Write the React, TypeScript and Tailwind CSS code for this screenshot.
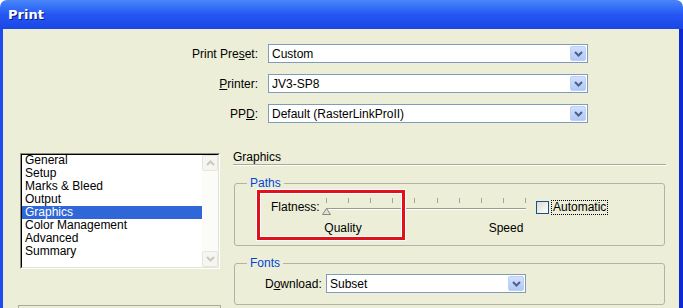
import React from "react";

const PANEL_ITEMS = [
  "General",
  "Setup",
  "Marks & Bleed",
  "Output",
  "Graphics",
  "Color Management",
  "Advanced",
  "Summary",
];

function DropButton() {
  return (
    <div className="flex w-[16px] items-center justify-center rounded-[2px] border border-[#bccff7] bg-gradient-to-b from-[#d2e0fd] to-[#b1c7f7]">
      <svg width="9" height="6" viewBox="0 0 9 6">
        <path d="M1 1 L4.5 4.5 L8 1" fill="none" stroke="#4d6185" strokeWidth="2" />
      </svg>
    </div>
  );
}

function Combo({ value, width }: { value: string; width: string }) {
  return (
    <div className={`flex h-[19px] ${width} border border-[#7f9db9] bg-white p-px`}>
      <div className="flex flex-1 items-center pl-[2px] leading-none">{value}</div>
      <DropButton />
    </div>
  );
}

function ScrollArrow({ up }: { up?: boolean }) {
  return (
    <div className="flex h-[16px] w-[16px] items-center justify-center rounded-[2px] border border-[#e6e6dc] bg-[#f6f6f1]">
      <svg width="9" height="6" viewBox="0 0 9 6">
        <path
          d={up ? "M1 5 L4.5 1.5 L8 5" : "M1 1 L4.5 4.5 L8 1"}
          fill="none"
          stroke="#c9c9bf"
          strokeWidth="2"
        />
      </svg>
    </div>
  );
}

function Slider() {
  const ticks = Array.from({ length: 10 }, (_, i) => 5.5 + Math.round(i * 22.1));
  return (
    <svg width="210" height="18" viewBox="0 0 210 18">
      {ticks.map((x, i) => (
        <line key={i} x1={x} y1="0" x2={x} y2="5" stroke="#a5a596" strokeWidth="1" />
      ))}
      <line x1="5" y1="10.5" x2="205" y2="10.5" stroke="#9c9c8e" strokeWidth="1" />
      <line x1="5" y1="11.5" x2="205" y2="11.5" stroke="#ffffff" strokeWidth="1" />
      <path d="M1.5 16.5 L5.5 10.5 L9.5 16.5 Z" fill="#e2e2d8" stroke="#8a8a7e" strokeWidth="1" />
    </svg>
  );
}

export default function App() {
  return (
    <div className="h-[308px] w-[683px] overflow-hidden bg-white font-['Liberation_Sans',Arial,sans-serif] text-[12px] text-black">
      {/* Title bar */}
      <div className="flex h-[29px] items-center rounded-t-[7px] bg-gradient-to-b from-[#4a86f8] via-[#2556f4] to-[#1a47e6] pl-[8px]">
        <span className="font-['DejaVu_Sans',sans-serif] text-[13px] font-bold text-white [text-shadow:1px_1px_0_#0a1d7a]">
          Print
        </span>
      </div>

      {/* Window body */}
      <div className="h-[279px] border-l-[3px] border-r-[4px] border-l-[#1f4cec] border-r-[#0b2ad4] bg-[#eceed8]">
        {/* Top selectors */}
        <div className="flex flex-col gap-[11px] pt-[15px]">
          <div className="flex items-center">
            <div className="w-[255px] text-right">
              Print Pre<span className="underline">s</span>et:
            </div>
            <div className="ml-[10px]">
              <Combo value="Custom" width="w-[320px]" />
            </div>
          </div>
          <div className="flex items-center">
            <div className="w-[255px] text-right">
              <span className="underline">P</span>rinter:
            </div>
            <div className="ml-[10px]">
              <Combo value="JV3-SP8" width="w-[320px]" />
            </div>
          </div>
          <div className="flex items-center">
            <div className="w-[255px] text-right">
              PP<span className="underline">D</span>:
            </div>
            <div className="ml-[10px]">
              <Combo value="Default (RasterLinkProII)" width="w-[320px]" />
            </div>
          </div>
        </div>

        <div className="mt-[30px] flex">
          {/* Panel list */}
          <div className="ml-[17px] flex flex-col">
            <div className="h-[116px] w-[200px] border border-b-white border-l-[#8e8e82] border-r-white border-t-[#8e8e82]">
              <div className="flex h-full border border-b-[#e4e3d8] border-l-black border-r-[#e4e3d8] border-t-black bg-white">
                <div className="-mt-px flex-1">
                  {PANEL_ITEMS.map((item) => (
                    <div
                      key={item}
                      className={`h-[13px] pl-[3px] leading-[13px] ${
                        item === "Graphics" ? "bg-[#2f66d8] text-white" : ""
                      }`}
                    >
                      {item}
                    </div>
                  ))}
                </div>
                <div className="flex w-[16px] flex-col justify-between bg-[#fbfbf8]">
                  <ScrollArrow up />
                  <ScrollArrow />
                </div>
              </div>
            </div>
            <div className="-ml-[2px] mt-[36px] h-[20px] w-[203px] border border-[#a9a99a]" />
          </div>

          {/* Graphics panel */}
          <div className="-mt-[3px] ml-[12px] w-[433px]">
            <div className="h-[15px] border-b border-[#aca899] leading-[14px]">Graphics</div>
            <div className="h-px bg-white" />

            <fieldset className="relative ml-px mt-[10px] h-[70px] w-[431px] rounded-[3px] border border-[#b3b3a3]">
              <legend className="ml-[12px] px-[3px] leading-[14px] text-[#0046d5]">Paths</legend>
              <div className="mt-[8px] flex h-[18px] items-center pl-[36px]">
                <div className="w-[50px]">Flatness:</div>
                <Slider />
                <div className="ml-[5px] h-[13px] w-[13px] border border-[#1c5180] bg-gradient-to-br from-[#dcdcd4] to-white" />
                <div className="ml-[2px] border border-dotted border-black px-px leading-[13px]">Automatic</div>
              </div>
              <div className="mt-[5px] flex leading-[14px]">
                <div className="ml-[68px] w-[80px] text-center">Quality</div>
                <div className="ml-[83px] w-[80px] text-center">Speed</div>
              </div>
              {/* highlight annotation */}
              <div className="absolute left-[22px] top-[0px] h-[50px] w-[148px] border-[3px] border-[#e0101c] shadow-[0_0_0_1px_white,inset_0_0_0_1px_white]" />
            </fieldset>

            <fieldset className="ml-px mt-[10px] h-[49px] w-[431px] rounded-[3px] border border-[#b3b3a3]">
              <legend className="ml-[12px] px-[3px] leading-[14px] text-[#0046d5]">Fonts</legend>
              <div className="mt-[4px] flex items-center pl-[30px]">
                <div className="w-[61px]">
                  D<span className="underline">o</span>wnload:
                </div>
                <Combo value="Subset" width="w-[200px]" />
              </div>
            </fieldset>
          </div>
        </div>
      </div>
    </div>
  );
}
